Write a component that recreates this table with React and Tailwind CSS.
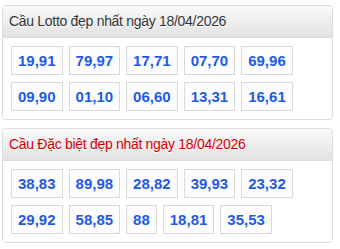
const cards = [
  {
    title: "Cầu Lotto đẹp nhất ngày 18/04/2026",
    red: false,
    nums: ["19,91", "79,97", "17,71", "07,70", "69,96", "09,90", "01,10", "06,60", "13,31", "16,61"],
  },
  {
    title: "Cầu Đặc biệt đẹp nhất ngày 18/04/2026",
    red: true,
    nums: ["38,83", "89,98", "28,82", "39,93", "23,32", "29,92", "58,85", "88", "18,81", "35,53"],
  },
];

export default function App() {
  return (
    <div
      className="w-[340px] h-[249px] bg-white pt-[5px] pl-[2px]"
      style={{ fontFamily: '"Liberation Sans", Arial, sans-serif' }}
    >
      {cards.map((card) => (
        <div
          key={card.title}
          className="w-[331px] mb-[8px] border border-[#dcdcdc] rounded-[4px] overflow-hidden"
        >
          <div
            className={`h-[32px] px-[6px] flex items-center text-[14px] tracking-[-0.3px] border-b border-[#dcdcdc] bg-gradient-to-b from-[#fafafa] to-[#e2e2e2] [text-shadow:0_1px_0_#fff] ${
              card.red ? "text-[#d00000]" : "text-[#333]"
            }`}
          >
            {card.title}
          </div>
          <div className="px-[8px] pt-[8px] pb-[8px] flex flex-wrap gap-x-[6px] gap-y-[7px] bg-white">
            {card.nums.map((n) => (
              <span
                key={n}
                className="border border-[#d9d9d9] bg-[#fdfdff] px-[6px] py-[4px] leading-[19px] text-[15px] font-bold text-[#1f5ae6]"
              >
                {n}
              </span>
            ))}
          </div>
        </div>
      ))}
    </div>
  );
}
